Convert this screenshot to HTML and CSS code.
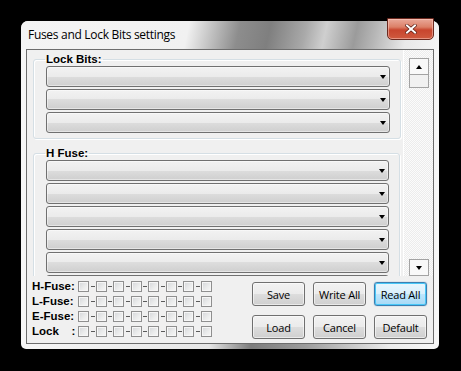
FILE: index.html
```html
<!DOCTYPE html>
<html lang="en">
  <head>
    <meta charset="utf-8">
    <title>Fuses and Lock Bits settings</title>
    <link rel="stylesheet" href="styles.css">
  </head>
  <body>

    <div class="window">
      <div class="titlebar">
        <span class="title">Fuses and Lock Bits settings</span>
        <button class="close" aria-label="Close">
          <svg width="12" height="10" viewBox="0 0 12 10">
            <path d="M2 1.5 L10 8.5 M10 1.5 L2 8.5" stroke="#5a1a10" stroke-width="3.4" stroke-linecap="square"/>
            <path d="M2 1.5 L10 8.5 M10 1.5 L2 8.5" stroke="#fff" stroke-width="2" stroke-linecap="square"/>
          </svg>
        </button>
      </div>

      <div class="client">
        <div class="scroller">
          <div class="groups">
            <fieldset class="group">
              <legend>Lock Bits:</legend>
              <div class="combo"></div>
              <div class="combo"></div>
              <div class="combo"></div>
            </fieldset>

            <fieldset class="group group-h">
              <legend>H Fuse:</legend>
              <div class="combo"></div>
              <div class="combo"></div>
              <div class="combo"></div>
              <div class="combo"></div>
              <div class="combo"></div>
              <div class="combo"></div>
              <div class="combo"></div>
              <div class="combo"></div>
            </fieldset>
          </div>

          <div class="vscroll">
            <span class="sb-btn sb-up"></span>
            <span class="sb-thumb"></span>
            <span class="sb-btn sb-down"></span>
          </div>
        </div>

        <div class="bottom">
          <div class="fuse-grid">
            <div class="fuse-row">
              <span class="fuse-label">H-Fuse:</span>
              <span class="bits">
                <i class="cb"></i><b class="dash"></b><i class="cb"></i><b class="dash"></b><i class="cb"></i><b class="dash"></b><i class="cb"></i><b class="dash"></b><i class="cb"></i><b class="dash"></b><i class="cb"></i><b class="dash"></b><i class="cb"></i><b class="dash"></b><i class="cb"></i>
              </span>
            </div>
            <div class="fuse-row">
              <span class="fuse-label">L-Fuse:</span>
              <span class="bits">
                <i class="cb"></i><b class="dash"></b><i class="cb"></i><b class="dash"></b><i class="cb"></i><b class="dash"></b><i class="cb"></i><b class="dash"></b><i class="cb"></i><b class="dash"></b><i class="cb"></i><b class="dash"></b><i class="cb"></i><b class="dash"></b><i class="cb"></i>
              </span>
            </div>
            <div class="fuse-row">
              <span class="fuse-label">E-Fuse:</span>
              <span class="bits">
                <i class="cb"></i><b class="dash"></b><i class="cb"></i><b class="dash"></b><i class="cb"></i><b class="dash"></b><i class="cb"></i><b class="dash"></b><i class="cb"></i><b class="dash"></b><i class="cb"></i><b class="dash"></b><i class="cb"></i><b class="dash"></b><i class="cb"></i>
              </span>
            </div>
            <div class="fuse-row">
              <span class="fuse-label">Lock    :</span>
              <span class="bits">
                <i class="cb"></i><b class="dash"></b><i class="cb"></i><b class="dash"></b><i class="cb"></i><b class="dash"></b><i class="cb"></i><b class="dash"></b><i class="cb"></i><b class="dash"></b><i class="cb"></i><b class="dash"></b><i class="cb"></i><b class="dash"></b><i class="cb"></i>
              </span>
            </div>
          </div>

          <div class="buttons">
            <button class="btn">Save</button>
            <button class="btn">Write All</button>
            <button class="btn btn-default">Read All</button>
            <button class="btn">Load</button>
            <button class="btn">Cancel</button>
            <button class="btn">Default</button>
          </div>
        </div>
      </div>
    </div>

  </body>
</html>
```

FILE: styles.css
```css
* {
    box-sizing: border-box;
}
body {
    margin: 0;
    background: #000;
    font-family: "Open Sans", "Noto Sans", sans-serif;
}

/* --- window frame --- */
.window {
    width: 418px;
    height: 328px;
    margin: 21px 0 0 21px;
    padding: 0 5px 5px;
    display: flex;
    flex-direction: column;
    border-radius: 7px 7px 5px 5px;
    background: linear-gradient(to right, #f6f6f6 0, #e6e6e6 45%, #7c7c7c 55%, #9c9c9c 68%, #ececec 88%, #f8f8f8 100%);
}
.titlebar {
    height: 28px;
    margin: 0 -5px;
    padding-left: 7px;
    display: flex;
    align-items: center;
    border-radius: 7px 7px 0 0;
    background: linear-gradient(102deg, #f4f4f4 0, #f1f1f1 165px, #c9c9c9 185px, #8d8d8d 215px, #7f7f7f 245px, #a9a9a9 280px, #cfcfcf 300px, #9b9b9b 330px, #b8b8b8 350px, #e9e9e9 380px, #f6f6f6 418px);
}
.title {
    font-size: 12px;
    letter-spacing: -0.3px;
    color: #000;
    line-height: 14px;
}
.close {
    align-self: flex-start;
    margin: -3px 5px 0 auto;
    width: 47px;
    height: 22px;
    padding: 0;
    display: flex;
    align-items: center;
    justify-content: center;
    border: 1px solid #6b2a20;
    border-radius: 0 0 5px 5px;
    background: linear-gradient(#e9a899 0, #dc8068 40%, #c8452e 55%, #cf5a3f 100%);
    box-shadow: inset 0 0 0 1px rgba(255, 210, 200, .5);
}

/* --- client area --- */
.client {
    flex: 1;
    display: flex;
    flex-direction: column;
    border: 1px solid #6d6d6d;
    background: #f0f0f0;
}
.scroller {
    height: 226px;
    display: flex;
}
.groups {
    flex: 1;
    padding: 2px 0 0 6px;
    overflow: hidden;
}
.group {
    width: 368px;
    margin: 0;
    padding: 0 10px 5px 12px;
    border: 1px solid #d5dfe5;
    border-radius: 3px;
    box-shadow: 1px 1px 0 #fff, inset 1px 1px 0 #fff;
    display: flex;
    flex-direction: column;
    gap: 2px;
    min-width: 0;
}
.group legend {
    margin-left: -1px;
    padding: 0 1px;
    font: bold 11.5px/14px "Liberation Sans", Arial, sans-serif;
    color: #000;
}
.group-h {
    width: 367px;
    margin-top: 7px;
}
.combo {
    height: 21px;
    flex: none;
    border: 1px solid #707070;
    border-radius: 3px;
    background: linear-gradient(#f2f2f2 0, #ebebeb 50%, #dddddd 50%, #cfcfcf 100%);
    box-shadow: inset 0 0 0 1px rgba(255, 255, 255, .45);
    display: flex;
    align-items: center;
    justify-content: flex-end;
    padding-right: 3px;
}
.combo:after {
    content: "";
    border-left: 3.5px solid transparent;
    border-right: 3.5px solid transparent;
    border-top: 4px solid #000;
}

/* --- scroll bar --- */
.vscroll {
    width: 30px;
    padding: 8px 0 0 5px;
    display: flex;
    flex-direction: column;
    background-color: #f7f7f7;
    background-image: repeating-conic-gradient(#ececec 0 25%, #fbfbfb 0 50%);
    background-size: 2px 2px;
    border-left: 1px solid #fff;
}
.sb-btn, .sb-thumb {
    width: 20px;
    border: 1px solid #a3a3a3;
    background: #f9f9f9;
    display: flex;
    align-items: center;
    justify-content: center;
}
.sb-btn {
    height: 17px;
}
.sb-thumb {
    height: 14px;
    margin-top: -1px;
    background: #f1f1f1;
}
.sb-down {
    margin-top: auto;
}
.sb-up:after, .sb-down:after {
    content: "";
    border-left: 3.5px solid transparent;
    border-right: 3.5px solid transparent;
}
.sb-up:after {
    border-bottom: 4px solid #000;
}
.sb-down:after {
    border-top: 4px solid #000;
}

/* --- bottom: fuse bits + buttons --- */
.bottom {
    flex: 1;
    display: flex;
    justify-content: space-between;
    padding: 5px 6px 0 5px;
}
.fuse-grid {
    display: flex;
    flex-direction: column;
    gap: 4px;
}
.fuse-row {
    height: 11px;
    display: flex;
    align-items: center;
}
.fuse-label {
    width: 46px;
    font: bold 11.5px/11px "Liberation Sans", Arial, sans-serif;
    color: #000;
    white-space: pre;
}
.bits {
    display: flex;
    align-items: center;
}
.cb {
    width: 11px;
    height: 11px;
    border: 1px solid #8f8f8f;
    background: linear-gradient(135deg, #d4d6d9 0, #eceded 60%, #f7f7f7 100%);
    box-shadow: inset 0 0 0 1px #f6f6f6;
}
.dash {
    width: 7px;
    height: 11px;
    display: flex;
    align-items: center;
    justify-content: center;
}
.dash:nth-of-type(even) {
    width: 6px;
}
.dash:before {
    content: "";
    width: 4px;
    height: 1px;
    background: #5a5a5a;
}
.buttons {
    margin-top: 1px;
    display: grid;
    grid-template-columns: repeat(3, 53px);
    grid-auto-rows: 24px;
    column-gap: 8px;
    row-gap: 9px;
}
.btn {
    padding: 0;
    font: 11px "Open Sans", "Noto Sans", sans-serif;
    letter-spacing: -0.2px;
    color: #000;
    border: 1px solid #707070;
    border-radius: 3px;
    background: linear-gradient(#f2f2f2 0, #ebebeb 50%, #dddddd 50%, #cfcfcf 100%);
    box-shadow: inset 0 0 0 1px rgba(255, 255, 255, .55);
}
.btn-default {
    border-color: #3c7fb1;
    background: linear-gradient(#eaf6fd 0, #d9f0fc 50%, #bee6fd 50%, #a7d9f5 100%);
    box-shadow: inset 0 0 0 1px #48c8f8, 0 0 1px #3c7fb1;
}
```
